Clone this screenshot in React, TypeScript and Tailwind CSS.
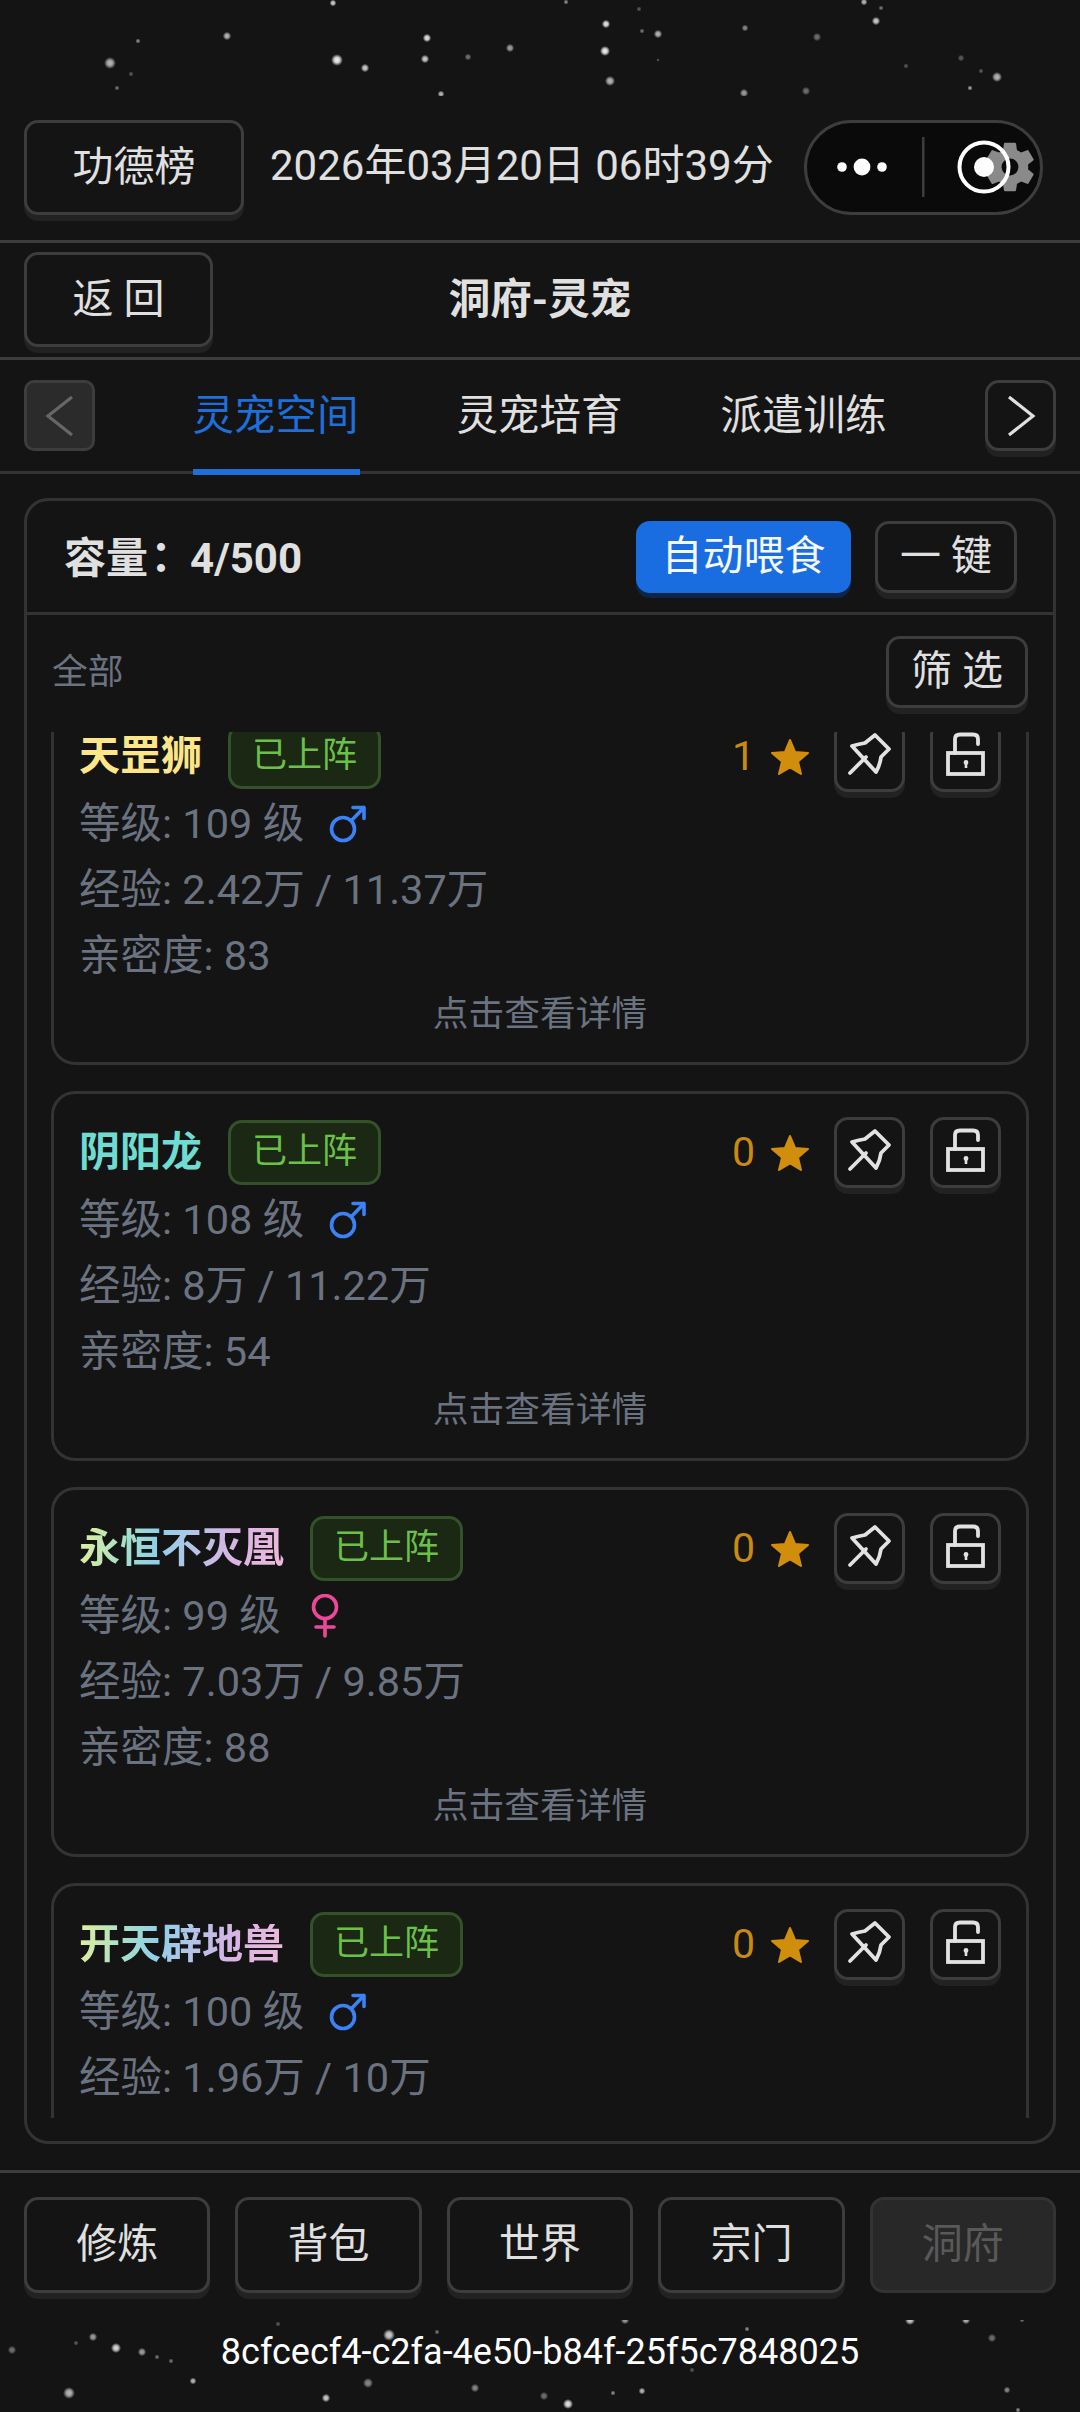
import { IoSettingsSharp } from 'react-icons/io5';

const topStars: [number, number, number, number][] = [
  [333, 3, 2, 0.8], [566, 2, 1.5, 0.5], [864, 2, 2, 0.7], [881, 8, 1.5, 0.4], [639, 9, 1.5, 0.3],
  [876, 21, 2.5, 0.8], [606, 24, 2.5, 0.9], [227, 36, 2.5, 0.7], [427, 38, 2.5, 0.9], [138, 41, 1.5, 0.5],
  [745, 28, 2, 0.5], [642, 31, 1.5, 0.4], [658, 34, 2.5, 0.7], [817, 37, 2.5, 0.4], [510, 48, 2.5, 0.6],
  [605, 51, 3, 0.95], [468, 57, 2, 0.4], [337, 60, 3.5, 0.95], [425, 59, 2.5, 0.8], [110, 63, 3.5, 0.7],
  [365, 68, 2.5, 0.8], [906, 66, 1.5, 0.3], [961, 58, 2, 0.3], [981, 71, 1.5, 0.3], [997, 77, 3, 0.7],
  [131, 74, 1.5, 0.3], [610, 81, 3, 0.7], [117, 88, 1.5, 0.4], [970, 88, 1.5, 0.6], [441, 94, 2, 0.7],
  [744, 93, 2.5, 0.6], [806, 91, 2.5, 0.4], [658, 60, 1, 0.3],
];

// y is relative to the footer top (2320)
const bottomStars: [number, number, number, number][] = [
  [625, 0, 2.5, 0.6], [910, 0, 3, 0.8], [966, 0, 2.5, 0.7], [1022, 0, 1.5, 0.4], [278, 4, 1.5, 0.3],
  [389, 15, 3.5, 0.8], [437, 12, 1.5, 0.4], [93, 17, 2.5, 0.6], [76, 23, 1.5, 0.3], [116, 28, 3, 0.85],
  [12, 30, 2.5, 0.4], [142, 32, 2.5, 0.6], [157, 37, 1.5, 0.4], [171, 41, 1.5, 0.4], [747, 9, 1.5, 0.5],
  [992, 18, 2.5, 0.4], [692, 50, 1.5, 0.3], [193, 61, 2, 0.7], [368, 63, 3, 0.5], [475, 68, 2.5, 0.5],
  [69, 73, 3.5, 0.7], [544, 76, 2.5, 0.4], [642, 71, 2, 0.7], [613, 73, 1.5, 0.5], [1007, 70, 2, 0.5],
  [326, 78, 2.5, 0.8], [568, 84, 3, 0.9], [1018, 90, 1.5, 0.5],
];

function Stars({ id, items, height }: { id: string; items: [number, number, number, number][]; height: number }) {
  return (
    <svg width="1080" height={height} className="block absolute left-0 top-0">
      <defs>
        <radialGradient id={id}>
          <stop offset="0%" stopColor="#ffffff" />
          <stop offset="45%" stopColor="#ffffff" stopOpacity="0.85" />
          <stop offset="100%" stopColor="#ffffff" stopOpacity="0" />
        </radialGradient>
      </defs>
      {items.map(([x, y, r, o], i) => (
        <circle key={i} cx={x} cy={y} r={r * 1.7} fill={`url(#${id})`} opacity={o} />
      ))}
    </svg>
  );
}

const btn =
  'flex items-center justify-center border-[3px] border-[#3d3d3d] rounded-[14px] bg-[#141414] shadow-[0_6px_0_#222222] text-[#e0e0e0]';

function PinIcon() {
  return (
    <svg viewBox="0 0 65 65" className="w-[65px] h-[65px]" fill="none" stroke="#e2e2e2" strokeWidth="3.8" strokeLinejoin="round" strokeLinecap="round">
      <path d="M15 22 Q22 20 28 19 L38 11 L52 25 L44 33 Q43 41 39 48 Z" />
      <path d="M13 49 L29 33" />
    </svg>
  );
}

function LockIcon() {
  return (
    <svg viewBox="0 0 65 65" className="w-[65px] h-[65px]" fill="none" stroke="#e2e2e2" strokeWidth="3.8">
      <rect x="15" y="29" width="35" height="21" />
      <path d="M22 29 V15 Q22 10.5 27 10.5 H40 Q45 10.5 45 15 V20" strokeLinecap="round" />
      <circle cx="33" cy="38.5" r="2.4" fill="#e2e2e2" stroke="none" />
      <path d="M33 39 V44" strokeWidth="2.6" />
    </svg>
  );
}

function MaleIcon() {
  return (
    <svg viewBox="0 0 40 40" className="w-[40px] h-[40px]" fill="none" stroke="#3b82f6" strokeWidth="3.6" strokeLinecap="round" strokeLinejoin="round">
      <circle cx="15" cy="25" r="11.5" />
      <path d="M23.5 16.5 L36 3.5 M25 3.5 H36 V14.5" />
    </svg>
  );
}

function FemaleIcon() {
  return (
    <svg viewBox="0 0 40 44" className="w-[40px] h-[44px]" fill="none" stroke="#ec4899" strokeWidth="3.6" strokeLinecap="round">
      <circle cx="20" cy="13" r="11.5" />
      <path d="M20 24.5 V42 M11 33 H29" />
    </svg>
  );
}

function StarIcon() {
  return (
    <svg viewBox="0 0 40 40" className="w-[40px] h-[40px]" fill="#d18d0c" stroke="#d18d0c" strokeWidth="2" strokeLinejoin="round">
      <path d="M20 3 L25 15 L38 16 L28 24.5 L31 37 L20 30.5 L9 37 L12 24.5 L2 16 L15 15 Z" />
    </svg>
  );
}

type Pet = {
  name: string;
  nameClass: string;
  stars: number;
  level: string;
  gender: 'male' | 'female';
  exp: string;
  love: number;
};

const rainbow =
  'bg-[linear-gradient(100deg,#e6ee9c_0%,#a8e0c8_22%,#8fd0e8_38%,#b4c4e8_55%,#d8b4e4_75%,#eebada_100%)] bg-clip-text text-transparent';

const pets: Pet[] = [
  { name: '天罡狮', nameClass: 'text-[#fde68a]', stars: 1, level: '109', gender: 'male', exp: '2.42万 / 11.37万', love: 83 },
  { name: '阴阳龙', nameClass: 'text-[#6fdcd2]', stars: 0, level: '108', gender: 'male', exp: '8万 / 11.22万', love: 54 },
  { name: '永恒不灭凰', nameClass: rainbow, stars: 0, level: '99', gender: 'female', exp: '7.03万 / 9.85万', love: 88 },
  { name: '开天辟地兽', nameClass: rainbow, stars: 0, level: '100', gender: 'male', exp: '1.96万 / 10万', love: 0 },
];

function PetCard({ pet }: { pet: Pet }) {
  return (
    <div className="shrink-0 h-[370px] border-[3px] border-[#333333] rounded-[24px] px-[25px] pt-[23px]">
      <div className="flex items-center h-[71px]">
        <span className={`text-[41px] font-bold leading-none ${pet.nameClass}`}>{pet.name}</span>
        <span className="ml-[26px] h-[65px] px-[21px] flex items-center text-[35px] text-[#6cc04a] bg-[#1a2814] border-[3px] border-[#34522a] rounded-[14px]">
          已上阵
        </span>
        <span className="ml-auto text-[41px] text-[#c98a10]">{pet.stars}</span>
        <span className="ml-[15px]">
          <StarIcon />
        </span>
        <button className={`${btn} ml-[24px] w-[71px] h-[71px]`}>
          <PinIcon />
        </button>
        <button className={`${btn} ml-[25px] w-[71px] h-[71px]`}>
          <LockIcon />
        </button>
      </div>
      <div className="text-[41.5px] leading-[66px] text-[#6b7280]">
        <div className="flex items-center h-[66px] -mt-[1px]">
          <span>等级: {pet.level} 级</span>
          <span className="ml-[24px] flex">{pet.gender === 'male' ? <MaleIcon /> : <FemaleIcon />}</span>
        </div>
        <div>经验: {pet.exp}</div>
        <div>亲密度: {pet.love}</div>
      </div>
      <div className="text-center text-[35.75px] leading-[50px] text-[#6b7280]">点击查看详情</div>
    </div>
  );
}

export default function App() {
  return (
    <div
      className="w-[1080px] h-[2412px] overflow-hidden flex flex-col bg-[#141414] text-[#e0e0e0]"
      style={{ fontFamily: 'Roboto, "Noto Sans CJK SC", sans-serif' }}
    >
      <div className="relative h-[120px] shrink-0">
        <Stars id="top-star" items={topStars} height={96} />
      </div>

      {/* date row */}
      <div className="h-[123px] shrink-0 flex items-start pl-[24px] pr-[37px] border-b-[3px] border-[#3d3d3d]">
        <button className={`${btn} w-[220px] h-[95px] text-[41px]`}>功德榜</button>
        <span className="ml-[26px] mt-[21px] text-[42px] leading-[50px] whitespace-nowrap">2026年03月20日 06时39分</span>
        <div className="relative ml-auto w-[239px] h-[95px] rounded-full border-[3px] border-[#3d3d3d] bg-[#0a0a0a] shrink-0">
          <IoSettingsSharp className="absolute left-[176px] top-[17px] text-[#8a8a8a]" size={54} />
          <svg viewBox="0 0 233 89" className="absolute inset-0 w-[233px] h-[89px]">
            <circle cx="35" cy="44" r="4.8" fill="#fff" />
            <circle cx="55" cy="44" r="8.4" fill="#fff" />
            <circle cx="75" cy="44" r="4.8" fill="#fff" />
            <rect x="115" y="14" width="2.5" height="60" fill="#3d3d3d" />
            <circle cx="177" cy="44" r="24.5" fill="none" stroke="#fff" strokeWidth="4" />
            <circle cx="177" cy="44" r="10" fill="#fff" />
          </svg>
        </div>
      </div>

      {/* title row */}
      <div className="h-[117px] shrink-0 grid grid-cols-[1fr_auto_1fr] items-start pt-[9px] px-[24px] border-b-[3px] border-[#3d3d3d]">
        <button className={`${btn} w-[189px] h-[95px] text-[41px]`}>返 回</button>
        <span className="mt-[23px] text-[41.5px] leading-[50px] font-bold">洞府-灵宠</span>
        <span />
      </div>

      {/* tabs */}
      <div className="h-[114px] shrink-0 relative flex items-center px-[24px] border-b-[3px] border-[#333333]">
        <button className="flex items-center justify-center w-[71px] h-[71px] border-[3px] border-[#3d3d3d] rounded-[10px] bg-[#2b2b2b]">
          <svg viewBox="0 0 32 44" className="w-[32px] h-[44px]" fill="none" stroke="#666666" strokeWidth="3.2">
            <path d="M28 3 L4 22 L28 41" />
          </svg>
        </button>
        <div className="flex-1 flex justify-center text-[41.5px] -ml-[1px]">
          <span className="relative w-[264px] text-center text-[#1d6fdc] leading-[50px]">
            灵宠空间
            <span className="absolute left-[49px] w-[167px] h-[6px] -bottom-[34px] bg-[#1d6fdc]" />
          </span>
          <span className="w-[264px] text-center leading-[50px]">灵宠培育</span>
          <span className="w-[264px] text-center leading-[50px]">派遣训练</span>
        </div>
        <button className={`${btn} w-[71px] h-[71px] rounded-[10px]`}>
          <svg viewBox="0 0 32 44" className="w-[32px] h-[44px]" fill="none" stroke="#e0e0e0" strokeWidth="3.2">
            <path d="M4 3 L28 22 L4 41" />
          </svg>
        </button>
      </div>

      {/* panel */}
      <div className="h-[1646px] mt-[24px] mx-[24px] shrink-0 flex flex-col border-[3px] border-[#333333] rounded-[24px]">
        <div className="h-[114px] shrink-0 flex items-center pl-[37px] pr-[36px] border-b-[3px] border-[#333333]">
          <span className="text-[42px] font-bold whitespace-pre">
            容量<span className="inline-block -translate-x-[8px] font-['Noto_Sans_CJK_TC']">：</span>4/500
          </span>
          <button className="ml-auto w-[215px] h-[72px] rounded-[14px] bg-[#1a6de0] text-[#f4f8ff] text-[41px] shadow-[0_5px_0_#0c2548]">
            自动喂食
          </button>
          <button className={`${btn} ml-[24px] w-[142px] h-[72px] text-[41px]`}>一 键</button>
        </div>
        <div className="h-[117px] shrink-0 flex items-start pl-[25px] pr-[25px] pt-[21px]">
          <span className="mt-[12px] text-[35.75px] leading-[48px] text-[#6b7280]">全部</span>
          <button className={`${btn} ml-auto w-[142px] h-[72px] text-[41px]`}>筛 选</button>
        </div>
        <div className="h-[1386px] shrink-0 overflow-hidden px-[24px]">
          <div className="flex flex-col gap-[26px] -mt-[37px]">
            {pets.map((p) => (
              <PetCard key={p.name} pet={p} />
            ))}
          </div>
        </div>
      </div>

      {/* bottom nav */}
      <div className="mt-[26px] h-[150px] shrink-0 grid grid-cols-5 gap-[25px] px-[24px] pt-[24px] border-t-[3px] border-[#3d3d3d]">
        {['修炼', '背包', '世界', '宗门'].map((t) => (
          <button key={t} className={`${btn} h-[96px] text-[41px]`}>
            {t}
          </button>
        ))}
        <button className="h-[96px] flex items-center justify-center rounded-[14px] border-[3px] border-[#333333] bg-[#282828] text-[#595959] text-[41px]">
          洞府
        </button>
      </div>

      {/* footer */}
      <div className="relative flex-1">
        <Stars id="bottom-star" items={bottomStars} height={92} />
        <div className="relative text-center text-[36px] leading-[40px] mt-[12px] text-white">
          8cfcecf4-c2fa-4e50-b84f-25f5c7848025
        </div>
      </div>
    </div>
  );
}
